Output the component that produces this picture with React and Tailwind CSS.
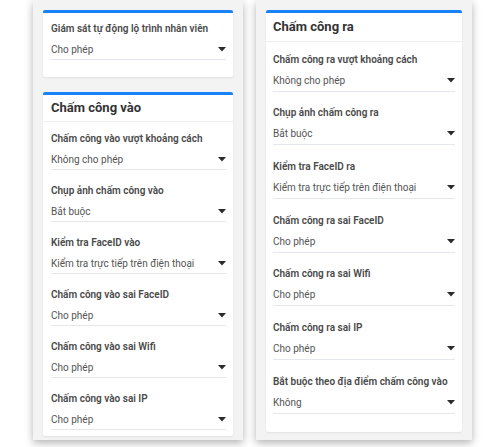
import React from "react";

const font = { fontFamily: "Roboto, 'Liberation Sans', sans-serif" };

function Caret() {
  return (
    <svg width="8" height="5" viewBox="0 0 8 5" className="shrink-0">
      <path d="M0 0 L8 0 L4 4.5 Z" fill="#2b2b2b" />
    </svg>
  );
}

function FieldL({ label, value, first }) {
  return (
    <div className={first ? "" : "mt-[11px]"}>
      <div className="h-[20px] leading-[20px] text-[10px] font-semibold text-[#4a4a4a] whitespace-nowrap">{label}</div>
      <div className="h-[21px] flex items-center justify-between border-b border-[#e4e7ee] text-[10px] text-[#555]">
        <span className="whitespace-nowrap">{value}</span>
        <Caret />
      </div>
    </div>
  );
}

function FieldR({ label, value, first }) {
  return (
    <div className={first ? "" : "mt-[10.7px]"}>
      <div className="h-[21px] leading-[21px] text-[10px] font-semibold text-[#4a4a4a] whitespace-nowrap">{label}</div>
      <div className="h-[22px] flex items-center justify-between border-b border-[#e4e7ee] text-[10px] text-[#555]">
        <span className="whitespace-nowrap">{value}</span>
        <Caret />
      </div>
    </div>
  );
}

export default function App() {
  const leftFields = [
    ["Chấm công vào vượt khoảng cách", "Không cho phép"],
    ["Chụp ảnh chấm công vào", "Bắt buộc"],
    ["Kiểm tra FaceID vào", "Kiểm tra trực tiếp trên điện thoại"],
    ["Chấm công vào sai FaceID", "Cho phép"],
    ["Chấm công vào sai Wifi", "Cho phép"],
    ["Chấm công vào sai IP", "Cho phép"],
  ];
  const rightFields = [
    ["Chấm công ra vượt khoảng cách", "Không cho phép"],
    ["Chụp ảnh chấm công ra", "Bắt buộc"],
    ["Kiểm tra FaceID ra", "Kiểm tra trực tiếp trên điện thoại"],
    ["Chấm công ra sai FaceID", "Cho phép"],
    ["Chấm công ra sai Wifi", "Cho phép"],
    ["Chấm công ra sai IP", "Cho phép"],
    ["Bắt buộc theo địa điểm chấm công vào", "Không"],
  ];
  return (
    <div className="w-[501px] h-[447px] bg-white overflow-hidden flex items-start pl-[33px] gap-[13px]" style={font}>
      {/* Left column */}
      <div className="w-[210px] bg-[#f3f3f3] pt-[10px] pb-[4px] px-[10px] shadow-[0_3px_8px_rgba(0,0,0,0.3)]">
        <div className="bg-white rounded-[2px] border-t-[3px] border-[#1a82f7] shadow-[0_1px_2px_rgba(0,0,0,0.08)] pl-[8px] pr-[7px] pt-[6px] pb-[17px]">
          <FieldL first label="Giám sát tự động lộ trình nhân viên" value="Cho phép" />
        </div>
        <div className="mt-[15px] bg-white rounded-[2px] border-t-[3px] border-[#1a82f7] shadow-[0_1px_2px_rgba(0,0,0,0.08)]">
          <div className="h-[27px] flex items-center px-[8px] border-b border-[#eeeeee] text-[13px] font-bold text-[#333]">
            Chấm công vào
          </div>
          <div className="pl-[8px] pr-[7px] pt-[7px] pb-[6px]">
            {leftFields.map(([l, v], i) => (
              <FieldL key={l} first={i === 0} label={l} value={v} />
            ))}
          </div>
        </div>
      </div>
      {/* Right column */}
      <div className="w-[216px] bg-[#f3f3f3] pt-[10px] pb-[8px] px-[10px] shadow-[0_3px_8px_rgba(0,0,0,0.3)]">
        <div className="bg-white rounded-[2px] border-t-[3px] border-[#1a82f7] shadow-[0_1px_2px_rgba(0,0,0,0.08)]">
          <div className="h-[29px] flex items-center px-[7px] border-b border-[#eeeeee] text-[13px] font-bold text-[#333]">
            Chấm công ra
          </div>
          <div className="px-[7px] pt-[6.5px] pb-[18px]">
            {rightFields.map(([l, v], i) => (
              <FieldR key={l} first={i === 0} label={l} value={v} />
            ))}
          </div>
        </div>
      </div>
    </div>
  );
}
